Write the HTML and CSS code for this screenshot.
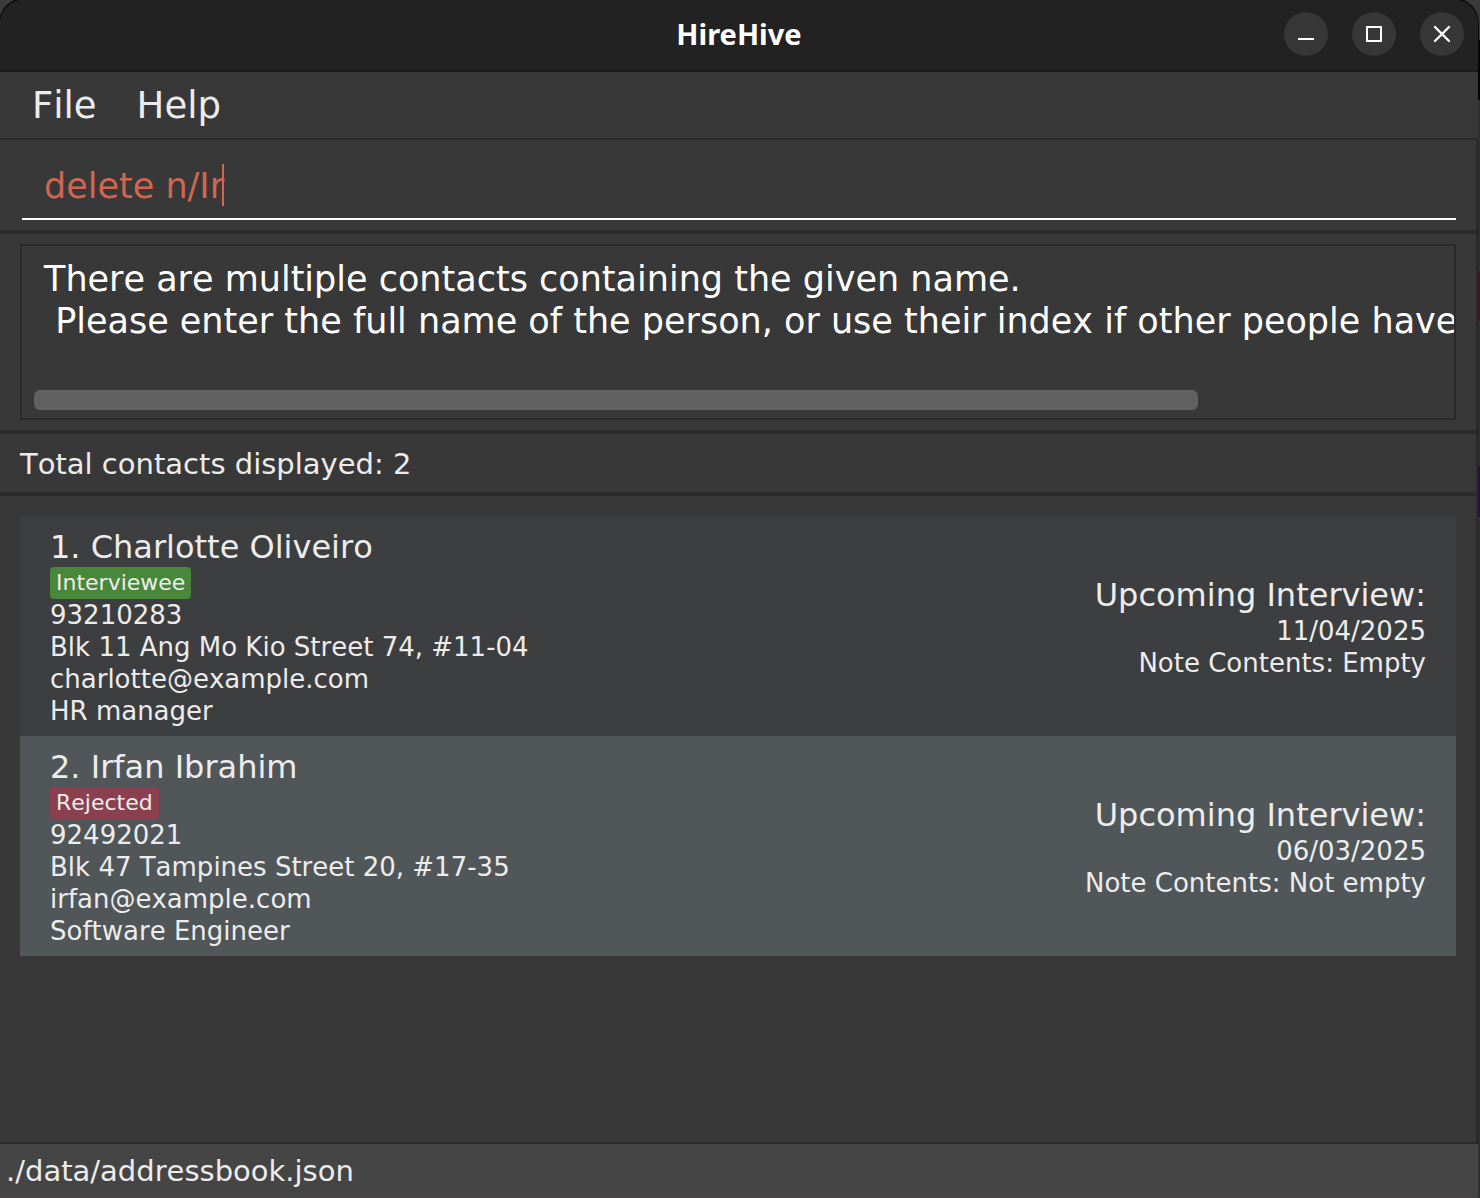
FILE: index.html
```html
<!DOCTYPE html>
<html lang="en">
<head>
<meta charset="utf-8">
<meta name="viewport" content="width=device-width, initial-scale=1">
<title>HireHive</title>
<link rel="stylesheet" href="styles.css">
</head>
<body>
<div class="window">
  <header class="titlebar">
    <h1 class="title">HireHive</h1>
    <div class="window-controls">
      <button class="control" type="button" aria-label="Minimize">
        <svg viewBox="0 0 44 44"><path d="M14 26h16v2H14z" fill="currentColor"/></svg>
      </button>
      <button class="control" type="button" aria-label="Maximize">
        <svg viewBox="0 0 44 44"><path d="M15 15h14v14H15z" fill="none" stroke="currentColor" stroke-width="2"/></svg>
      </button>
      <button class="control" type="button" aria-label="Close">
        <svg viewBox="0 0 44 44"><path d="M15 15l14 14M29 15L15 29" fill="none" stroke="currentColor" stroke-width="2.4" stroke-linecap="round"/></svg>
      </button>
    </div>
  </header>

  <nav class="menubar">
    <button class="menu" type="button">File</button>
    <button class="menu" type="button">Help</button>
  </nav>

  <main class="content">
    <section class="pane command-pane">
      <div class="command-field">
        <input class="command" type="text" value="delete n/Ir" aria-label="Command" spellcheck="false">
        <span class="caret"></span>
      </div>
    </section>

    <section class="pane result-pane">
      <div class="result-box">
        <textarea class="result" readonly rows="2" wrap="off" aria-label="Result">There are multiple contacts containing the given name.
 Please enter the full name of the person, or use their index if other people have the same name.</textarea>
        <div class="scrollbar"></div>
      </div>
    </section>

    <section class="pane count-pane">
      <p class="count">Total contacts displayed: 2</p>
    </section>

    <section class="list-pane">
      <ul class="contacts">
        <li class="contact">
          <div class="details">
            <h2 class="name">1. Charlotte Oliveiro</h2>
            <span class="tag tag-interviewee">Interviewee</span>
            <p class="line">93210283</p>
            <p class="line">Blk 11 Ang Mo Kio Street 74, #11-04</p>
            <p class="line">charlotte@example.com</p>
            <p class="line">HR manager</p>
          </div>
          <div class="interview">
            <h3 class="name">Upcoming Interview:</h3>
            <p class="line">11/04/2025</p>
            <p class="line">Note Contents: Empty</p>
          </div>
        </li>
        <li class="contact">
          <div class="details">
            <h2 class="name">2. Irfan Ibrahim</h2>
            <span class="tag tag-rejected">Rejected</span>
            <p class="line">92492021</p>
            <p class="line">Blk 47 Tampines Street 20, #17-35</p>
            <p class="line">irfan@example.com</p>
            <p class="line">Software Engineer</p>
          </div>
          <div class="interview">
            <h3 class="name">Upcoming Interview:</h3>
            <p class="line">06/03/2025</p>
            <p class="line">Note Contents: Not empty</p>
          </div>
        </li>
      </ul>
    </section>
  </main>

  <footer class="statusbar">./data/addressbook.json</footer>
</div>
</body>
</html>
```
FILE: styles.css
```css
* {
  box-sizing: border-box;
}

h1, h2, h3, p, ul {
  margin: 0;
  padding: 0;
  font-weight: normal;
}

button, input, textarea {
  margin: 0;
  padding: 0;
  border: 0;
  outline: 0;
  background: none;
  color: inherit;
  font-family: inherit;
  font-kerning: inherit;
}

/* The desktop behind the window shows as a thin strip on the right. */
body {
  margin: 0;
  padding-right: 2px;
  min-height: 100vh;
  display: flex;
  background: linear-gradient(#3a3a3a 40px, #060606 40px, #060606 100px, #303030 100px, #303030 271px, #351c1e 271px, #351c1e 321px, #303030 321px, #303030 466px, #2b1233 466px, #2b1233 517px, #303030 517px);
  color: #ececec;
  font-family: "DejaVu Sans", sans-serif;
  font-kerning: none;
}

.window {
  flex: 1;
  min-width: 0;
  display: flex;
  flex-direction: column;
  border-radius: 24px 24px 0 0;
  overflow: hidden;
  background: #383838;
}

.window:has(.titlebar) {
  box-shadow: 0 -1px 0 1px #0c0c0c;
  clip-path: inset(-2px -2px calc(100% - 40px) -2px);
  clip-path: polygon(-2px -2px, calc(100% + 2px) -2px, calc(100% + 2px) 40px, 100% 40px, 100% 100%, -2px 100%);
}

.titlebar {
  display: grid;
  grid-template-columns: 1fr auto 1fr;
  align-items: center;
  height: 72px;
  padding: 0 14px;
  border-bottom: 2px solid #191919;
  background: #222222;
}

.title {
  grid-column: 2;
  padding-bottom: 2px;
  color: #ffffff;
  font: bold 29px/40px "Noto Sans", "Open Sans", sans-serif;
}

.window-controls {
  justify-self: end;
  display: flex;
  gap: 24px;
  padding-bottom: 2px;
}

.control {
  width: 44px;
  height: 44px;
  border-radius: 50%;
  background: #373737;
  color: #ffffff;
}

.control svg {
  display: block;
}

.menubar {
  display: flex;
  gap: 40px;
  padding: 12px 32px 10px;
  border-bottom: 2px solid #2a2a2a;
}

.menu {
  font-size: 37px;
  line-height: 44px;
}

.content {
  flex: 1;
  display: flex;
  flex-direction: column;
  border-right: 2px solid #2a2a2a;
}

.pane {
  padding: 10px 20px;
  border-bottom: 4px solid #2a2a2a;
}

.command-field {
  position: relative;
  margin-left: 2px;
  padding: 14px 22px 10px;
  border-bottom: 2px solid #ffffff;
}

.command {
  display: block;
  width: 100%;
  height: 44px;
  color: #d06651;
  font-size: 35px;
}

.caret {
  position: absolute;
  top: 14px;
  left: 200px;
  width: 2px;
  height: 42px;
  background: #d06651;
}

.result-box {
  padding: 12px 0 8px 12px;
  border: 2px solid #2a2a2a;
}

.result {
  display: block;
  width: 100%;
  height: 122px;
  padding-left: 10px;
  overflow: hidden;
  resize: none;
  color: #ffffff;
  font-size: 35px;
  line-height: 42px;
  white-space: pre;
}

.scrollbar {
  width: 82%;
  height: 20px;
  margin-top: 10px;
  border-radius: 6px;
  background: #606060;
}

.count {
  font-size: 29px;
  line-height: 40px;
}

.count-pane {
  padding-bottom: 8px;
}

.list-pane {
  flex: 1;
  padding: 20px;
}

.contacts {
  list-style: none;
}

.contact {
  display: flex;
  justify-content: space-between;
  align-items: center;
  padding: 11px 30px 9px;
  background: #3c3e3f;
}

.contact:nth-child(even) {
  background: #515658;
}

.details {
  display: flex;
  flex-direction: column;
  align-items: flex-start;
}

.interview {
  text-align: right;
}

.name {
  font-size: 32px;
  line-height: 40px;
}

.line {
  font-size: 26px;
  line-height: 32px;
}

.tag {
  padding: 0 6px;
  border-radius: 4px;
  font-size: 22px;
  line-height: 32px;
}

.tag-interviewee {
  background: #49873a;
}

.tag-rejected {
  background: #8b4050;
}

.statusbar {
  padding: 9px 6px 7px;
  border-top: 2px solid #2a2a2a;
  border-bottom: 2px solid #4a4647;
  background: #454545;
  font-size: 29px;
  line-height: 36px;
}
```
